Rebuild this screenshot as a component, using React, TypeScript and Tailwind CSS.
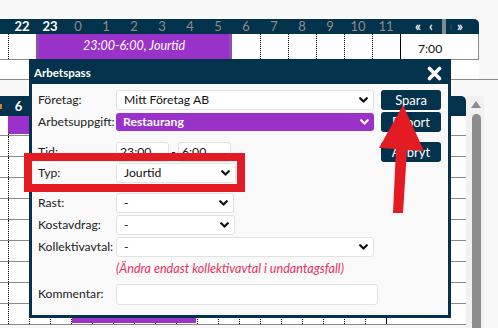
import React from "react";

const topHours = [22, 23, 0, 1, 2, 3, 4, 5, 6, 7, 8, 9, 10, 11];
const lowerCells = Array.from({ length: 18 }, (_, i) => i);

function Chevron({ white }: { white?: boolean }) {
  return (
    <svg width="9" height="6" viewBox="0 0 9 6" className="shrink-0">
      <path
        d="M1.2 1.2 L4.5 4.6 L7.8 1.2"
        fill="none"
        stroke={white ? "#ffffff" : "#111111"}
        strokeWidth="2.2"
        strokeLinecap="round"
        strokeLinejoin="round"
      />
    </svg>
  );
}

function Select({ value, className, purple }: { value: string; className: string; purple?: boolean }) {
  return (
    <div
      className={`flex h-full items-center justify-between rounded-[3px] pl-[7px] pr-[5px] ${
        purple ? "bg-[#9a32c9] font-bold text-white" : "border border-[#e2e2e2] bg-white text-[#111]"
      } ${className}`}
    >
      <span>{value}</span>
      <Chevron white={purple} />
    </div>
  );
}

function Field({ label, className, children }: { label: string; className: string; children?: React.ReactNode }) {
  return (
    <div className={`flex items-center ${className}`}>
      <div className="w-[78px] shrink-0 whitespace-nowrap text-[#222]">{label}</div>
      {children}
    </div>
  );
}

function LowerRow({ h, bar, total }: { h: string; bar?: string; total?: string }) {
  return (
    <div className={`relative flex border-b border-[#8a8a8a] bg-white ${h}`}>
      <div className="w-[8px] shrink-0" />
      {lowerCells.map((c) => (
        <div key={c} className="w-[21px] shrink-0 border-l border-dotted border-black" />
      ))}
      <div className="flex w-[80px] shrink-0 items-center justify-start border-l border-black pl-[20px] text-[12px] text-[#111]">
        {total}
      </div>
      {bar ? <div className={`absolute bg-[#9a32c9] ${bar}`} /> : null}
    </div>
  );
}

export default function App() {
  return (
    <div className="relative h-[328px] w-[498px] overflow-hidden bg-[#f8f8f8] font-['Lato',sans-serif] text-[12.2px] leading-none">
      {/* upper week */}
      <div className="h-[19px]" />
      <div className="flex h-[15px] w-[479px] items-center rounded-tr-[5px] bg-[#03324c] text-[13px]">
        <div className="w-[8px]" />
        {topHours.map((h) => (
          <div
            key={h}
            className={`w-[28px] text-center ${h >= 22 ? "font-bold text-white" : "text-[#8d8d8d]"}`}
          >
            {h}
          </div>
        ))}
        <div className="flex flex-1 items-center pl-[15px] font-bold text-white">
          <span className="w-[14px]">«</span>
          <span className="w-[13px]">‹</span>
          <span className="h-[15px] w-[4px] bg-[#7d8a93]" />
          <span className="w-[8px] pl-[3px] text-[#2b4a5e]">›</span>
          <span className="pl-[3px]">»</span>
        </div>
      </div>
      <div className="flex h-[26px] w-[479px] border-r border-b border-[#8a8a8a] bg-white">
        <div className="w-[8px] shrink-0" />
        <div className="w-[28px] shrink-0 border-l border-dotted border-black" />
        <div className="flex w-[196px] shrink-0 items-center justify-center border-x-[3px] border-[#8c4fb3] bg-[#9a32c9] text-[12.5px] italic text-white">
          23:00-6:00, Jourtid
        </div>
        <div className="w-[28px] shrink-0" />
        {[0, 1, 2, 3, 4].map((c) => (
          <div key={c} className="w-[28px] shrink-0 border-l border-dotted border-black" />
        ))}
        <div className="flex flex-1 items-center border-l border-black pt-[6px] pl-[17px] text-[#111]">7:00</div>
      </div>
      <div className="h-[20px] border-b border-[#8a8a8a]">
        <div className="h-full w-[479px] bg-white" />
      </div>
      <div className="h-[16px]" />

      {/* lower week */}
      <div className="flex">
        <div className="w-[466px]">
          <div className="flex h-[20px] items-center rounded-tr-[5px] bg-[#03324c] text-[13px]">
            <div className="h-[5px] w-[2px] bg-[#e07b2a]" />
            <div className="w-[6px]" />
            <div className="w-[21px] text-center font-bold text-white">6</div>
          </div>
          <LowerRow h="h-[20px]" bar="left-[8px] top-0 bottom-[1px] w-[378px]" />
          <LowerRow h="h-[21px]" />
          <LowerRow h="h-[21px]" />
          <LowerRow h="h-[21px]" />
          <LowerRow h="h-[21px]" />
          <LowerRow h="h-[21px]" />
          <LowerRow h="h-[21px]" />
          <LowerRow h="h-[21px]" />
          <LowerRow h="h-[21px]" bar="left-[71px] top-[2px] bottom-[1px] w-[115px]" total="5:00" />
          <LowerRow h="h-[21px]" bar="left-[72px] top-[1px] bottom-[1px] w-[124px]" />
        </div>
        <div className="flex w-[18px] flex-col items-center bg-[#f1f1f1] pl-[2px]">
          <svg width="10" height="7" viewBox="0 0 10 7" className="mt-[5px]">
            <path d="M5 0 L10 7 L0 7 Z" fill="#8c8c8c" />
          </svg>
          <div className="mt-[6px] h-[240px] w-[9px] rounded-t-full bg-[#8c8c8c]" />
        </div>
      </div>

      {/* dialog */}
      <div className="absolute top-[59px] left-[29px] flex h-[259px] w-[422px] flex-col border-[3px] border-[#03324c] bg-[#f9f9f9]">
        <div className="flex h-[22px] shrink-0 items-center justify-between bg-[#03324c] pr-[6px] pl-[2px]">
          <span className="text-[11.5px] font-bold text-white">Arbetspass</span>
          <svg width="15" height="15" viewBox="0 0 15 15">
            <path d="M2.5 2.5 L12.5 12.5 M12.5 2.5 L2.5 12.5" stroke="#ffffff" strokeWidth="3.6" strokeLinecap="round" />
          </svg>
        </div>
        <div className="flex pr-[7px] pl-[6px]">
          <div className="flex w-[340px] flex-col">
            <Field label="Företag:" className="mt-[6px] h-[20px]">
              <Select value="Mitt Företag AB" className="w-[258px]" />
            </Field>
            <Field label="Arbetsuppgift:" className="mt-[3px] h-[18px]">
              <Select value="Restaurang" className="w-[258px]" purple />
            </Field>
            <Field label="Tid:" className="mt-[11px] h-[20px]">
              <div className="flex h-full w-[53px] items-center rounded-[3px] border border-[#e2e2e2] bg-white pl-[3px] text-[#111]">
                23:00
              </div>
              <span className="w-[9px] text-center">-</span>
              <div className="flex h-full w-[53px] items-center rounded-[3px] border border-[#e2e2e2] bg-white pl-[3px] text-[#111]">
                6:00
              </div>
            </Field>
            <Field label="Typ:" className="mt-[1px] h-[20px]">
              <Select value="Jourtid" className="w-[120px]" />
            </Field>
            <Field label="Rast:" className="mt-[10px] h-[20px]">
              <Select value="-" className="w-[118px]" />
            </Field>
            <Field label="Kostavdrag:" className="mt-[2px] h-[20px]">
              <Select value="-" className="w-[119px]" />
            </Field>
            <Field label="Kollektivavtal:" className="mt-[2px] h-[20px]">
              <Select value="-" className="w-[258px]" />
            </Field>
            <div className="flex h-[24px] items-center pl-[78px] text-[12.6px] italic text-[#e4335d]">
              (Ändra endast kollektivavtal i undantagsfall)
            </div>
            <Field label="Kommentar:" className="mt-[3px] h-[21px]">
              <div className="h-full w-[262px] rounded-[3px] border border-[#e2e2e2] bg-white" />
            </Field>
          </div>
          <div className="ml-[3px] flex w-[60px] flex-col text-[13px] text-white">
            <div className="mt-[6px] flex h-[20px] items-center justify-center rounded-[3px] bg-[#03324c]">Spara</div>
            <div className="mt-[2px] flex h-[20px] items-center justify-center rounded-[3px] bg-[#03324c]">Export</div>
            <div className="mt-[10px] flex h-[20px] items-center justify-center rounded-[3px] bg-[#03324c]">Avbryt</div>
          </div>
        </div>
      </div>

      {/* annotations */}
      <div className="pointer-events-none absolute top-[153px] left-[24px] h-[39px] w-[221px] border-[8px] border-[#e31b22]" />
      <svg className="pointer-events-none absolute top-0 left-0" width="498" height="328" viewBox="0 0 498 328">
        <polygon points="403,105 424,151 407,150 403,213 393,213 396,149 379,148" fill="#e31b22" />
      </svg>
    </div>
  );
}
